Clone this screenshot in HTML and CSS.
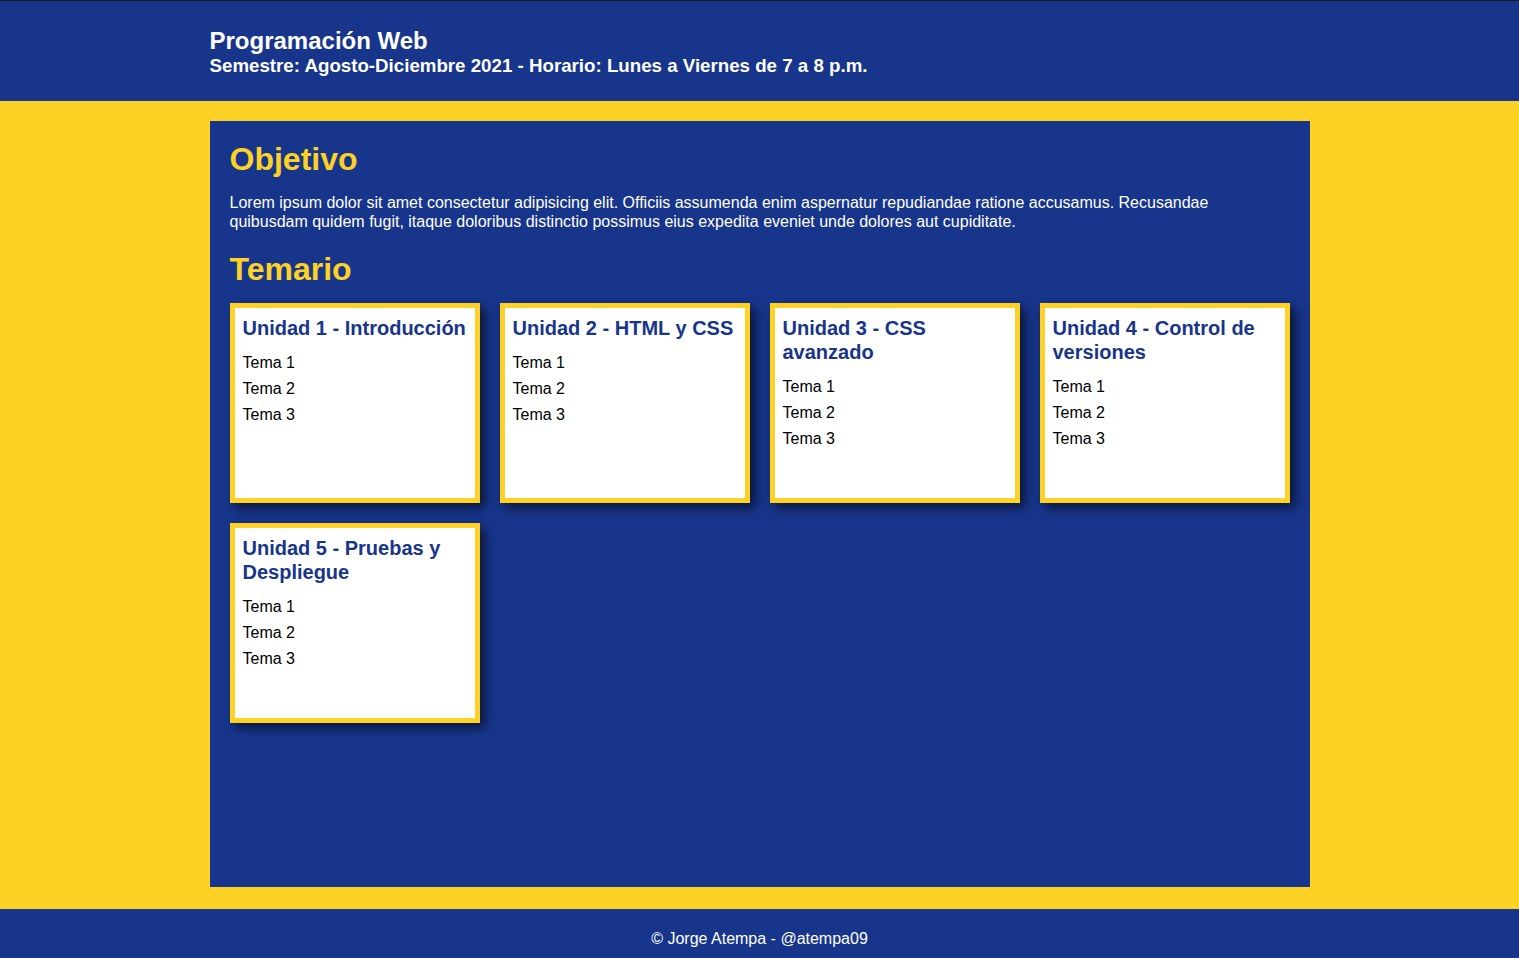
FILE: index.html
```
<!DOCTYPE html>
<html lang="es">
<head>
<meta charset="utf-8">
<title>Programación Web</title>
<link rel="stylesheet" href="styles.css">
</head>
<body>
<header class="site-header">
  <div class="wrap">
    <h1 class="site-title">Programación Web</h1>
    <p class="site-sub">Semestre: Agosto-Diciembre 2021 - Horario: Lunes a Viernes de 7 a 8 p.m.</p>
  </div>
</header>
<main class="main">
  <h2 class="section-title objetivo">Objetivo</h2>
  <p class="intro">Lorem ipsum dolor sit amet consectetur adipisicing elit. Officiis assumenda enim aspernatur repudiandae ratione accusamus. Recusandae quibusdam quidem fugit, itaque doloribus distinctio possimus eius expedita eveniet unde dolores aut cupiditate.</p>
  <h2 class="section-title temario">Temario</h2>
  <div class="cards">
    <section class="card">
      <h3 class="card-title">Unidad 1 - Introducción</h3>
      <ul class="topics"><li>Tema 1</li><li>Tema 2</li><li>Tema 3</li></ul>
    </section>
    <section class="card">
      <h3 class="card-title">Unidad 2 - HTML y CSS</h3>
      <ul class="topics"><li>Tema 1</li><li>Tema 2</li><li>Tema 3</li></ul>
    </section>
    <section class="card">
      <h3 class="card-title">Unidad 3 - CSS avanzado</h3>
      <ul class="topics"><li>Tema 1</li><li>Tema 2</li><li>Tema 3</li></ul>
    </section>
    <section class="card">
      <h3 class="card-title">Unidad 4 - Control de versiones</h3>
      <ul class="topics"><li>Tema 1</li><li>Tema 2</li><li>Tema 3</li></ul>
    </section>
    <section class="card">
      <h3 class="card-title">Unidad 5 - Pruebas y Despliegue</h3>
      <ul class="topics"><li>Tema 1</li><li>Tema 2</li><li>Tema 3</li></ul>
    </section>
  </div>
</main>
<footer class="site-footer">© Jorge Atempa - @atempa09</footer>
</body>
</html>
```
FILE: styles.css
```
* { box-sizing: border-box; }
html, body { margin: 0; padding: 0; }
body {
  background: #fdd224;
  font-family: "Liberation Sans", Arial, sans-serif;
  color: #fff;
}
.site-header {
  background: #17358b;
  border-top: 1px solid #1b1b1b;
  height: 101px;
  padding-top: 26px;
}
.wrap {
  width: 1100px;
  margin: 0 auto;
}
.site-title {
  margin: 0;
  font-size: 24px;
  font-weight: bold;
  line-height: 27px;
}
.site-sub {
  margin: 1px 0 0;
  font-size: 18.72px;
  font-weight: bold;
}
.main {
  width: 1100px;
  height: 766px;
  margin: 20px auto 22px;
  background: #17358b;
  padding: 20px 20px 20px;
}
.section-title {
  margin: 0 0 16px;
  font-size: 32px;
  font-weight: bold;
  color: #fdd224;
}
.objetivo { margin-bottom: 15px; }
.intro {
  margin: 0 0 20px;
  font-size: 16px;
  line-height: 19px;
  color: #fff;
}
.temario { margin-bottom: 15px; }
.cards {
  display: grid;
  grid-template-columns: repeat(4, 250px);
  gap: 20px;
}
.card {
  height: 200px;
  background: #fff;
  border: 5px solid #fdd224;
  padding: 8px 8px;
  box-shadow: 5px 5px 10px rgba(0, 0, 0, 0.6);
}
.card-title {
  margin: 0 0 10px;
  font-size: 20px;
  line-height: 24px;
  font-weight: bold;
  color: #17358b;
}
.topics {
  list-style: none;
  margin: 0;
  padding: 0;
  color: #000;
  font-size: 16px;
  line-height: 26px;
}
.site-footer {
  background: #17358b;
  height: 49px;
  padding-top: 21px;
  text-align: center;
  font-size: 16px;
  color: #fff;
}
```
